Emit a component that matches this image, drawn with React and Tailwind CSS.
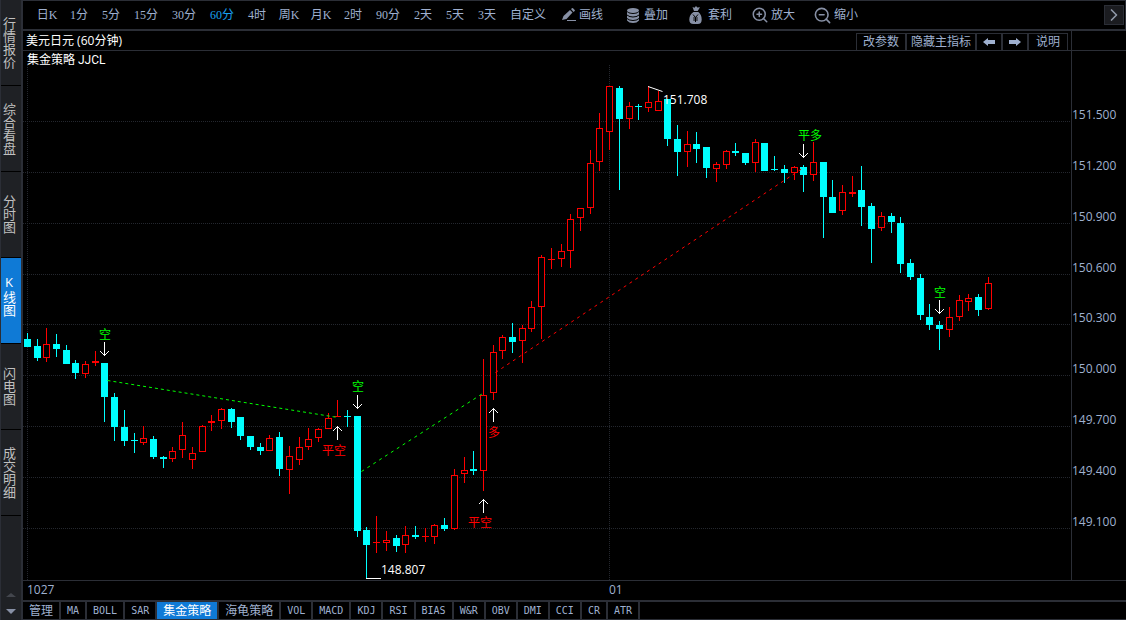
import { useState } from 'react';
import { ChevronRight, ZoomIn, ZoomOut } from 'lucide-react';
import clsx from 'clsx';

const sideTabs = ['行情报价', '综合看盘', '分时图', 'K线图', '闪电图', '成交明细'];

const periods = ['日K', '1分', '5分', '15分', '30分', '60分', '4时', '周K', '月K', '2时', '90分', '2天', '5天', '3天', '自定义'];

const indicators = ['管理', 'MA', 'BOLL', 'SAR', '集金策略', '海龟策略', 'VOL', 'MACD', 'KDJ', 'RSI', 'BIAS', 'W&R', 'OBV', 'DMI', 'CCI', 'CR', 'ATR'];

const gridLines = [
  [121, '151.500'], [172, '151.200'], [223, '150.900'], [274, '150.600'], [324, '150.300'],
  [375, '150.000'], [426, '149.700'], [477, '149.400'], [528, '149.100'],
];

const dates = [[27, '1027'], [609, '01']];

// high, body top, body bottom, low, rising
const candles = [
  [333, 339, 347, 347, 0], [339, 346, 358, 361, 0], [328, 344, 358, 362, 1], [334, 344, 349, 357, 0],
  [345, 350, 364, 364, 0], [360, 363, 373, 379, 0], [361, 364, 374, 378, 1], [351, 361, 363, 366, 1],
  [363, 363, 397, 422, 0], [393, 397, 427, 441, 0], [410, 427, 441, 446, 0], [433, 440, 441, 453, 0],
  [426, 438, 443, 445, 1], [436, 439, 457, 459, 0], [456, 457, 459, 468, 0], [447, 451, 459, 462, 1],
  [422, 435, 450, 458, 1], [447, 453, 460, 469, 1], [425, 426, 452, 452, 1], [415, 421, 423, 431, 1],
  [408, 409, 421, 429, 1], [408, 409, 422, 428, 0], [417, 417, 436, 440, 0], [436, 436, 447, 450, 0],
  [443, 447, 451, 455, 0], [435, 438, 451, 451, 1], [432, 437, 469, 476, 0], [446, 456, 470, 494, 1],
  [437, 447, 460, 465, 1], [428, 439, 447, 450, 1], [428, 429, 438, 442, 1], [413, 418, 429, 429, 1],
  [400, 416, 417, 417, 1], [410, 416, 417, 427, 0], [416, 416, 531, 537, 0], [527, 530, 545, 579, 0],
  [516, 542, 543, 553, 1], [531, 540, 543, 551, 1], [535, 538, 546, 552, 0], [526, 535, 545, 553, 1],
  [526, 535, 537, 539, 0], [528, 536, 537, 542, 1], [524, 525, 537, 544, 1], [518, 525, 529, 531, 0],
  [469, 475, 529, 530, 1], [457, 470, 474, 483, 1], [451, 469, 471, 475, 0], [359, 395, 471, 491, 1],
  [345, 352, 393, 400, 1], [335, 337, 351, 359, 1], [323, 337, 342, 353, 0], [325, 328, 341, 363, 1],
  [301, 307, 329, 332, 1], [255, 257, 307, 339, 1], [248, 259, 260, 269, 1], [244, 251, 259, 267, 1],
  [214, 219, 251, 268, 1], [208, 208, 218, 231, 1], [150, 163, 208, 214, 1], [113, 128, 162, 171, 1],
  [86, 86, 132, 150, 1], [86, 88, 119, 190, 0], [102, 106, 119, 129, 1], [104, 106, 107, 120, 0],
  [86, 102, 108, 112, 1], [91, 101, 111, 111, 1], [99, 99, 139, 146, 0], [125, 139, 152, 176, 0],
  [131, 144, 152, 167, 1], [132, 144, 149, 163, 0], [147, 147, 168, 178, 0], [162, 164, 169, 182, 1],
  [150, 151, 165, 169, 1], [143, 151, 153, 156, 0], [153, 153, 163, 165, 0], [139, 142, 163, 172, 1],
  [143, 143, 171, 171, 0], [156, 169, 170, 171, 0], [165, 169, 173, 183, 0], [166, 167, 173, 180, 1],
  [165, 167, 175, 192, 0], [142, 162, 175, 181, 1], [162, 162, 197, 238, 0], [180, 197, 213, 213, 0],
  [185, 192, 211, 215, 1], [176, 192, 194, 197, 1], [166, 190, 207, 226, 0], [203, 206, 229, 263, 0],
  [212, 216, 228, 231, 1], [213, 216, 222, 233, 0], [217, 223, 264, 273, 0], [259, 263, 277, 280, 0],
  [274, 278, 315, 320, 0], [304, 317, 325, 330, 0], [321, 325, 329, 350, 0], [307, 317, 330, 337, 1],
  [295, 300, 317, 321, 1], [294, 298, 302, 311, 1], [294, 297, 310, 316, 0], [277, 283, 309, 310, 1],
];

// label, label centre x, label baseline, arrow x, arrow top, direction, colour
const signals = [
  { text: '空', x: 105, y: 339, ax: 104, ay: 342, down: true, color: '#00ff00' },
  { text: '平空', x: 334, y: 455, ax: 337, ay: 426, down: false, color: '#ff0000' },
  { text: '空', x: 358, y: 391, ax: 357, ay: 395, down: true, color: '#00ff00' },
  { text: '多', x: 494, y: 437, ax: 493, ay: 408, down: false, color: '#ff0000' },
  { text: '平空', x: 480, y: 527, ax: 483, ay: 499, down: false, color: '#ff0000' },
  { text: '平多', x: 810, y: 140, ax: 803, ay: 144, down: true, color: '#00ff00' },
  { text: '空', x: 940, y: 297, ax: 939, ay: 300, down: true, color: '#00ff00' },
];

const candleX = (i) => Math.floor(27.303 + i * 9.7055);

const Candle = ({ x, data }) => {
  const [high, top, bottom, low, rising] = data;
  const color = rising ? '#ff0000' : '#00ffff';
  const hollow = rising && bottom - top > 2;
  return (
    <g fill={color}>
      <rect x={x} y={high} width="1" height={low - high} />
      <rect x={x - 3} y={top} width="7" height={bottom - top} />
      {hollow && <rect x={x - 2} y={top + 1} width="5" height={bottom - top - 2} fill="#000" />}
    </g>
  );
};

const Signal = ({ text, x, y, ax, ay, down, color }) => {
  const cx = ax + 0.5;
  return (
    <g>
      <text x={x} y={y} textAnchor="middle" fill={color} fontSize="12">{text}</text>
      <path
        d={down
          ? `M${cx} ${ay}v14M${cx - 4.5} ${ay + 9}l4.5 4.5l4.5 -4.5`
          : `M${cx} ${ay}v14M${cx - 4.5} ${ay + 5}l4.5 -4.5l4.5 4.5`}
        stroke="#fff"
        fill="none"
      />
    </g>
  );
};

const Chart = () => (
  <svg className="block h-full w-full" role="img" aria-label="美元日元 K线图">
    <g transform="translate(-23 -51)">
      <g stroke="#24272e" strokeDasharray="1 1" shapeRendering="crispEdges">
        {gridLines.map(([y]) => <line key={y} x1="23" x2="3000" y1={y + 0.5} y2={y + 0.5} />)}
        {dates.map(([x]) => <line key={x} x1={x + 0.5} x2={x + 0.5} y1="65" y2="580" />)}
      </g>
      <g shapeRendering="crispEdges">
        {candles.map((c, i) => <Candle key={i} x={candleX(i)} data={c} />)}
      </g>
      <g strokeDasharray="3 3" fill="none">
        <path d="M107.5 380.5L338 417.5" stroke="#00ff00" />
        <path d="M361.5 471.5L483.5 393" stroke="#00ff00" strokeDasharray="3 4" />
        <path d="M495.5 372.5L803 168" stroke="#ff0000" strokeDasharray="3 4" />
      </g>
      {signals.map((s) => <Signal key={s.ax} {...s} />)}
      <path d="M648 86.5L662.5 91.5M366 578.5h15" stroke="#fff" fill="none" />
      <g fill="#fff" fontSize="12">
        <text x="27" y="64" className="font-['Roboto','Noto_Sans_CJK_SC',sans-serif]">集金策略 JJCL</text>
        <text x="663" y="104">151.708</text>
        <text x="381" y="574">148.807</text>
      </g>
    </g>
  </svg>
);

const PencilIcon = () => (
  <svg width="14" height="14" viewBox="0 0 14 14" fill="#8790a5">
    <path d="M0 12l1.500-4L8 2l2.500 2.500L4.500 11z" />
    <path d="M9 1l1-.8q.5-.4 1 0l1.700 1.700q.4.5 0 1l-1.200 1z" />
    <rect x="5" y="12" width="9" height="1" />
  </svg>
);

const StackIcon = () => (
  <svg width="12" height="15" viewBox="0 0 12 15" fill="#8790a5">
    <ellipse cx="6" cy="2.500" rx="6" ry="2.500" />
    <path d="M0 4q2 2 6 2t6-2v2.500q-2 2-6 2t-6-2z" />
    <path d="M0 7.500q2 2 6 2t6-2V10q-2 2-6 2t-6-2z" />
    <path d="M0 11q2 2 6 2t6-2v1.500q-2 2.500-6 2.500t-6-2.500z" />
  </svg>
);

const BagIcon = () => (
  <svg width="13" height="18" viewBox="0 0 13 18">
    <path d="M3.500 1l2 .8L7 0l1.300 1.600L11 1.200 8.700 5H5zM4.500 6h4.800q3.400 2.700 3.400 7.500 0 4.500-4 4.500H4.500Q.3 18 .3 13.500.3 8.700 4.500 6z" fill="#8790a5" />
    <path d="M4 8.500l2.500 3L9 8.500M6.500 11.500V16M4.200 12h4.600M4.200 14h4.600" stroke="#000" fill="none" />
  </svg>
);

const ArrowIcon = ({ className }) => (
  <svg width="12" height="8" viewBox="0 0 12 8" fill="#9fb0cf" className={className}>
    <path d="M0 4l5-4v2h7v4H5v2z" />
  </svg>
);

const ToolButton = ({ icon, label, className }) => (
  <button type="button" className={clsx('flex items-center text-left', className)}>
    {icon}
    <span>{label}</span>
  </button>
);

export default function App() {
  const [side, setSide] = useState('K线图');
  const [period, setPeriod] = useState('60分');
  const [indicator, setIndicator] = useState('集金策略');

  return (
    <div className="flex min-h-screen bg-black font-['Open_Sans','Noto_Sans_CJK_SC',sans-serif] text-[12px] leading-4 text-[#9fb0cf]">
      <nav className="flex w-[23px] shrink-0 flex-col border-l border-r-2 border-l-[#2b2e36] border-r-[#2b2e36] bg-[#1f2125] text-[#c0c0c0]">
        {sideTabs.map((tab) => (
          <button
            key={tab}
            type="button"
            onClick={() => setSide(tab)}
            className={clsx(
              'flex h-[86px] items-center border-b border-black text-[13px]',
              side === tab && 'bg-[#0f7ad6] pb-3 text-white'
            )}
          >
            <span className="[text-orientation:upright] [writing-mode:vertical-rl]">{tab}</span>
          </button>
        ))}
        <div className="mt-auto flex flex-col items-center gap-3 pb-[6px]">
          <button type="button" aria-label="上移">
            <svg width="10" height="4" className="block" fill="#43464d"><path d="M0 4l5-4 5 4z" /></svg>
          </button>
          <button type="button" aria-label="下移">
            <svg width="10" height="5" className="block" fill="#8790a5"><path d="M0 0h10L5 5z" /></svg>
          </button>
        </div>
      </nav>

      <div className="flex min-w-0 flex-1 flex-col">
        <header className="flex h-[31px] shrink-0 items-center border-t border-r border-b-2 border-[#2b2e36] pl-2 whitespace-nowrap">
          {periods.map((p) => (
            <button
              key={p}
              type="button"
              onClick={() => setPeriod(p)}
              className={clsx(
                "shrink-0 text-center font-['Liberation_Serif','Noto_Sans_CJK_SC',serif]",
                p === '自定义' ? 'w-[50px]' : p.length === 3 ? 'w-[38px]' : 'w-8',
                period === p && 'text-[#18a0f0]'
              )}
            >
              {p}
            </button>
          ))}
          <ToolButton icon={<PencilIcon />} label="画线" className="ml-[9px] gap-[3px]" />
          <ToolButton icon={<StackIcon />} label="叠加" className="ml-6 gap-[5px]" />
          <ToolButton icon={<BagIcon />} label="套利" className="ml-[21px] gap-[6px]" />
          <ToolButton icon={<ZoomIn size={18} strokeWidth={2} color="#8790a5" />} label="放大" className="ml-[19px] gap-[2px]" />
          <ToolButton icon={<ZoomOut size={19} strokeWidth={2} color="#8790a5" />} label="缩小" className="ml-[18px] gap-[2px]" />
          <button type="button" aria-label="更多" className="mr-px ml-auto flex size-5 items-center justify-center border border-[#2b2e36] bg-[#1b1c20]">
            <ChevronRight size={20} strokeWidth={2} color="#9098a8" className="shrink-0" />
          </button>
        </header>

        <div className="flex h-5 shrink-0 border-b border-[#2b2e36]">
          <h1 className="flex-1 pt-[2px] pl-[3px] text-white">美元日元 (60分钟)</h1>
          <div className="mt-[2px] mr-[3px] flex divide-x-2 divide-[#2b2e36] border border-b-0 border-[#2b2e36]">
            <button type="button" className="w-[50px]">改参数</button>
            <button type="button" className="w-[70px]">隐藏主指标</button>
            <button type="button" aria-label="上一个" className="flex w-[26px] items-center justify-center"><ArrowIcon /></button>
            <button type="button" aria-label="下一个" className="flex w-[26px] items-center justify-center"><ArrowIcon className="rotate-180" /></button>
            <button type="button" className="w-[38px]">说明</button>
          </div>
          <div className="w-[55px] border-l border-[#2b2e36]" />
        </div>

        <main className="flex min-h-[529px] flex-1">
          <div className="relative min-w-0 flex-1">
            <div className="absolute inset-0"><Chart /></div>
          </div>
          <svg className="w-[55px] shrink-0 border-l border-[#2b2e36]" fill="#9fb0cf" fontSize="12">
            {gridLines.map(([y, label]) => <text key={label} x="0" y={y - 53}>{label}</text>)}
          </svg>
        </main>

        <svg className="h-5 w-full shrink-0 border-t border-[#2b2e36]" fill="#9fb0cf" fontSize="12">
          {dates.map(([x, label]) => <text key={label} x={x - 23} y="13">{label}</text>)}
        </svg>

        <footer className="flex h-5 shrink-0 border-t-2 border-b border-[#2b2e36] whitespace-nowrap">
          {indicators.map((name) => {
            const latin = /^[A-Z&]+$/.test(name);
            return (
              <button
                key={name}
                type="button"
                onClick={() => setIndicator(name)}
                className={clsx(
                  'shrink-0 border-r-2 border-[#2b2e36] px-[6px]',
                  latin && "font-['DejaVu_Sans_Mono',monospace] text-[10px]",
                  indicator === name && 'bg-[#0f7ad6] text-white'
                )}
              >
                {name}
              </button>
            );
          })}
        </footer>
      </div>
    </div>
  );
}
